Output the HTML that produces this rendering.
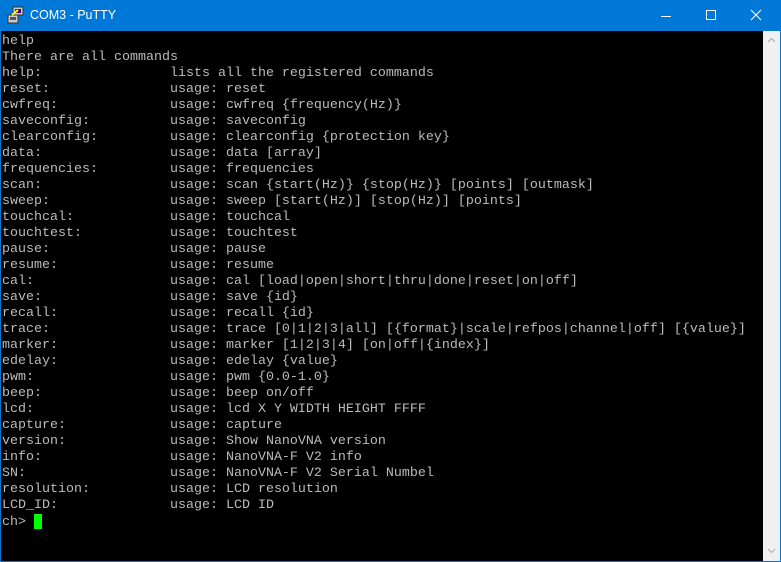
<!DOCTYPE html>
<html><head><meta charset="utf-8"><style>
html,body{margin:0;padding:0;width:781px;height:562px;overflow:hidden;background:#0078d7;}
.title{position:absolute;left:0;top:0;width:781px;height:31px;background:#0078d7;color:#fff;font:12px "Liberation Sans",sans-serif;}
.title .t{position:absolute;left:30px;top:8px;font-size:12.5px;}
.term{position:absolute;left:1px;top:31px;width:762px;height:530px;background:#000;}
pre{margin:0;position:absolute;left:1px;top:3px;font:13.33px/16px "Liberation Mono",monospace;color:#bbb;}
.cur{display:inline-block;width:8px;height:15px;background:#0f0;vertical-align:-3px;}
.sb{position:absolute;left:763px;top:31px;width:17px;height:530px;background:#f0f0f0;}
</style></head><body>
<div class="title">
<svg style="position:absolute;left:7px;top:6px" width="18" height="18" viewBox="0 0 18 18"><rect x="6" y="1" width="10" height="8" fill="#ccc" stroke="#333"/><rect x="8" y="3" width="6" height="4" fill="#409"/><rect x="1" y="9" width="10" height="8" fill="#ccc" stroke="#333"/><rect x="3" y="11" width="6" height="3" fill="#555"/><path d="M5 9 L11 4" stroke="#ff0" stroke-width="2"/></svg>
<span class="t">COM3 - PuTTY</span>
<svg style="position:absolute;left:660px;top:10px" width="12" height="12"><path d="M1 6.5H11" stroke="#fff"/></svg>
<svg style="position:absolute;left:705px;top:9px" width="12" height="12"><rect x="1.5" y="1.5" width="9" height="9" fill="none" stroke="#fff"/></svg>
<svg style="position:absolute;left:750px;top:9px" width="12" height="12"><path d="M1 1L11 11M11 1L1 11" stroke="#fff"/></svg>
</div>
<div class="term"><pre>help
There are all commands
help:                lists all the registered commands
reset:               usage: reset
cwfreq:              usage: cwfreq {frequency(Hz)}
saveconfig:          usage: saveconfig
clearconfig:         usage: clearconfig {protection key}
data:                usage: data [array]
frequencies:         usage: frequencies
scan:                usage: scan {start(Hz)} {stop(Hz)} [points] [outmask]
sweep:               usage: sweep [start(Hz)] [stop(Hz)] [points]
touchcal:            usage: touchcal
touchtest:           usage: touchtest
pause:               usage: pause
resume:              usage: resume
cal:                 usage: cal [load|open|short|thru|done|reset|on|off]
save:                usage: save {id}
recall:              usage: recall {id}
trace:               usage: trace [0|1|2|3|all] [{format}|scale|refpos|channel|off] [{value}]
marker:              usage: marker [1|2|3|4] [on|off|{index}]
edelay:              usage: edelay {value}
pwm:                 usage: pwm {0.0-1.0}
beep:                usage: beep on/off
lcd:                 usage: lcd X Y WIDTH HEIGHT FFFF
capture:             usage: capture
version:             usage: Show NanoVNA version
info:                usage: NanoVNA-F V2 info
SN:                  usage: NanoVNA-F V2 Serial Numbel
resolution:          usage: LCD resolution
LCD_ID:              usage: LCD ID
ch&gt; <span class="cur" style="vertical-align:-4px"></span></pre></div>
<div class="sb">
<svg style="position:absolute;left:4px;top:6px" width="9" height="6"><path d="M1 5L4.5 1.5L8 5" stroke="#aaa" fill="none"/></svg>
<svg style="position:absolute;left:4px;top:517px" width="9" height="6"><path d="M1 1L4.5 4.5L8 1" stroke="#aaa" fill="none"/></svg>
</div>
</body></html>
